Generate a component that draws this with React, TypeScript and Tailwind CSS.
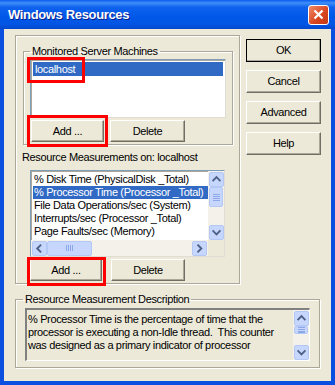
import React from "react";

// little helpers for the XP-ish look
const face = "bg-[#ECE9D8]";

function XpButton({ label, def = false, w = "w-[75px]", h = "h-[23px]" }: { label: string; def?: boolean; w?: string; h?: string }) {
  return (
    <div
      className={`${w} ${h} ${face} flex items-center justify-center border ${
        def ? "border-black" : "border-t-white border-l-white border-b-[#716F64] border-r-[#716F64]"
      } shadow-[inset_-1px_-1px_0_#ACA899]`}
    >
      <span className="leading-[13px]">{label}</span>
    </div>
  );
}

function Arrow({ dir }: { dir: "up" | "down" | "left" | "right" }) {
  const d = {
    up: "M3.5 7.5 L7 4 L10.5 7.5",
    down: "M3.5 5 L7 8.5 L10.5 5",
    left: "M8 3 L4.5 6.5 L8 10",
    right: "M5.5 3 L9 6.5 L5.5 10",
  }[dir];
  return (
    <svg width="14" height="13" viewBox="0 0 14 13" className="block">
      <path d={d} fill="none" stroke="#4D6185" strokeWidth="2" strokeLinecap="square" />
    </svg>
  );
}

function ScrollBtn({ dir }: { dir: "up" | "down" | "left" | "right" }) {
  return (
    <div className="w-[15px] h-[15px] shrink-0 rounded-[2px] border border-[#B4C8F6] bg-[#C6D6FC] flex items-center justify-center">
      <Arrow dir={dir} />
    </div>
  );
}

function VScroll({ thumbTop, thumbH }: { thumbTop: number; thumbH: number }) {
  return (
    <div className="w-[16px] h-full flex flex-col bg-[#F3F1E9] px-[1px] pt-[1px]">
      <ScrollBtn dir="up" />
      <div className="flex-1 flex flex-col">
        <div style={{ height: thumbTop }} />
        <div
          style={{ height: thumbH }}
          className="rounded-[2px] border border-[#B4C8F6] bg-[#C6D6FC] flex flex-col items-center justify-center gap-[1px]"
        >
          <div className="w-[7px] h-[1px] bg-[#8DA8E8]" />
          <div className="w-[7px] h-[1px] bg-[#8DA8E8]" />
          <div className="w-[7px] h-[1px] bg-[#8DA8E8]" />
          <div className="w-[7px] h-[1px] bg-[#8DA8E8]" />
        </div>
      </div>
      <ScrollBtn dir="down" />
    </div>
  );
}

function Etched({
  legend,
  legendClass = "",
  className = "",
  children,
}: {
  legend?: string;
  legendClass?: string;
  className?: string;
  children: React.ReactNode;
}) {
  return (
    <fieldset className={`border border-[#ACA899] shadow-[1px_1px_0_#fff,inset_1px_1px_0_#fff] ${className}`}>
      {legend && <legend className={`px-[2px] leading-[13px] ${legendClass}`}>{legend}</legend>}
      {children}
    </fieldset>
  );
}

const Red = ({ className }: { className: string }) => (
  <div className={`absolute border-[3px] border-[#FF0000] pointer-events-none ${className}`} />
);

const measures = [
  "% Disk Time (PhysicalDisk _Total)",
  "% Processor Time (Processor _Total)",
  "File Data Operations/sec (System)",
  "Interrupts/sec (Processor _Total)",
  "Page Faults/sec (Memory)",
  "Pages/sec (Memory)",
];

export default function App() {
  return (
    <div className="w-[335px] h-[385px] flex flex-col bg-[#0A4FE0] font-['Liberation_Sans',Arial,sans-serif] text-[11px] tracking-[-0.35px] text-black select-none">
      {/* title bar */}
      <div className="h-[29px] shrink-0 flex items-center pl-[8px] pr-[6px] bg-[linear-gradient(to_bottom,#0B5BF0_0%,#3E8EF7_10%,#0E62EE_25%,#0058E8_60%,#0355E3_85%,#0447CC_100%)]">
        <span className="flex-1 text-white font-bold text-[13px] leading-[16px] [text-shadow:1px_1px_0_#0A1E8C]">
          Windows Resources
        </span>
        <div className="w-[21px] h-[20px] rounded-[3px] border border-white bg-[linear-gradient(135deg,#F08A6A,#D8441E_60%,#C23A16)] flex items-center justify-center">
          <svg width="11" height="11" viewBox="0 0 11 11">
            <path d="M1.5 1.5 L9.5 9.5 M9.5 1.5 L1.5 9.5" stroke="#fff" strokeWidth="2.2" />
          </svg>
        </div>
      </div>

      {/* body */}
      <div className={`flex-1 mx-[4px] mb-[4px] ${face} flex flex-col pl-[11px] pt-[6px]`}>
        <div className="flex">
          {/* left panel */}
          <Etched className="w-[225px] h-[249px] pl-[7px] pt-[9px]">
            <Etched legend="Monitored Server Machines" className="w-[208px] px-[6px] pb-[2px]">
              <div className="relative mt-[1px]">
                <div className="w-[196px] h-[59px] bg-white border border-t-[#7F9DB9] border-l-[#7F9DB9] border-b-[#E0DED4] border-r-[#E0DED4] shadow-[inset_1px_1px_0_#ACA899] p-[2px]">
                  <div className="h-[14px] bg-[#316AC5] text-white pl-[2px] leading-[14px]">localhost</div>
                </div>
                <Red className="left-[-3px] top-[-2px] w-[58px] h-[26px]" />
              </div>
              <div className="flex mt-[2px] gap-[6px] pl-[1px]">
                <div className="relative">
                  <XpButton label="Add ..." w="w-[73px]" h="h-[22px]" />
                  <Red className="-left-[4px] -top-[5px] -right-[4px] -bottom-[5px]" />
                </div>
                <XpButton label="Delete" h="h-[22px]" />
              </div>
            </Etched>

            <div className="leading-[13px] mt-[6px] -ml-[1px]">Resource Measurements on: localhost</div>

            <div className="mt-[6px] ml-[7px] w-[195px] h-[87px] bg-white border border-t-[#7F9DB9] border-l-[#7F9DB9] border-b-[#E0DED4] border-r-[#E0DED4] shadow-[inset_1px_1px_0_#ACA899] flex flex-col">
              <div className="flex flex-1 min-h-0">
                <div className="flex-1 min-w-0 overflow-hidden pt-[2px] pl-[2px]">
                  {measures.map((m, i) => (
                    <div
                      key={m}
                      className={`h-[13px] leading-[13px] pl-[1px] whitespace-nowrap overflow-hidden ${
                        i === 1 ? "bg-[#316AC5] text-white" : ""
                      }`}
                    >
                      {m}
                    </div>
                  ))}
                </div>
                <VScroll thumbTop={0} thumbH={20} />
              </div>
              {/* horizontal scrollbar */}
              <div className="h-[16px] flex">
                <div className="flex-1 flex items-center bg-[#F3F1E9] pl-[1px] pr-[1px]">
                  <ScrollBtn dir="left" />
                  <div className="flex-1 flex">
                    <div className="w-[45px] h-[15px] rounded-[2px] border border-[#B4C8F6] bg-[#C6D6FC] flex items-center justify-center gap-[1px]">
                      <div className="w-[1px] h-[6px] bg-[#8DA8E8]" />
                      <div className="w-[1px] h-[6px] bg-[#8DA8E8]" />
                      <div className="w-[1px] h-[6px] bg-[#8DA8E8]" />
                      <div className="w-[1px] h-[6px] bg-[#8DA8E8]" />
                    </div>
                  </div>
                  <ScrollBtn dir="right" />
                </div>
                <div className={`w-[16px] ${face}`} />
              </div>
            </div>

            <div className="flex mt-[2px] ml-[7px] gap-[9px]">
              <div className="relative">
                <XpButton label="Add ..." w="w-[72px]" h="h-[22px]" />
                <Red className="-left-[3px] -top-[2px] -right-[4px] -bottom-[5px]" />
              </div>
              <XpButton label="Delete" w="w-[74px]" h="h-[22px]" />
            </div>
          </Etched>

          {/* right buttons */}
          <div className="ml-[6px] pt-[4px] flex flex-col gap-[8px]">
            <XpButton label="OK" def />
            <XpButton label="Cancel" />
            <XpButton label="Advanced" />
            <XpButton label="Help" />
          </div>
        </div>

        {/* description */}
        <Etched
          legend="Resource Measurement Description"
          legendClass="-ml-[2px]"
          className="mt-[9px] w-[305px] pl-[9px] pb-[6px]"
        >
          <div className="mt-[2px] w-[285px] h-[53px] border-t-2 border-l-2 border-t-[#808080] border-l-[#808080] border-b border-r border-b-white border-r-white flex">
            <div className="flex-1 pl-[1px] pt-[3px] leading-[13px]">
              % Processor Time is the percentage of time that the processor is executing a non-Idle thread.&nbsp; This counter was designed as a primary indicator of processor
            </div>
            <VScroll thumbTop={0} thumbH={8} />
          </div>
        </Etched>
      </div>
    </div>
  );
}
